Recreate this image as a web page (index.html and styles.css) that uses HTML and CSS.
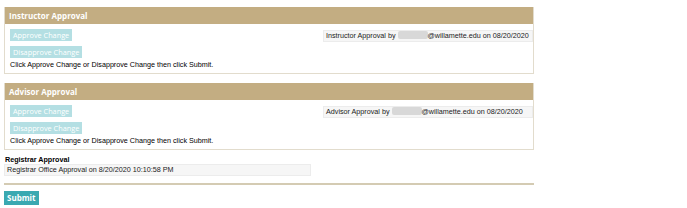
FILE: index.html
```html
<!DOCTYPE html>
<html lang="en">
<head>
  <meta charset="UTF-8">
  <title>Change Approval</title>
  <link rel="stylesheet" href="styles.css">
</head>
<body>
  <div class="approval-form">
    <!-- Instructor -->
    <div class="panel">
      <div class="panel-title">Instructor Approval</div>
      <div class="panel-body">
        <div class="actions">
          <button class="btn-light">Approve Change</button>
          <button class="btn-light">Disapprove Change</button>
          <div class="note">Click Approve Change or Disapprove Change then click Submit.</div>
        </div>
        <div class="field field-status">Instructor Approval by <span class="blur"></span>@willamette.edu on 08/20/2020</div>
      </div>
    </div>

    <!-- Advisor -->
    <div class="panel">
      <div class="panel-title">Advisor Approval</div>
      <div class="panel-body">
        <div class="actions">
          <button class="btn-light">Approve Change</button>
          <button class="btn-light">Disapprove Change</button>
          <div class="note">Click Approve Change or Disapprove Change then click Submit.</div>
        </div>
        <div class="field field-status">Advisor Approval by <span class="blur"></span>@willamette.edu on 08/20/2020</div>
      </div>
    </div>

    <!-- Registrar -->
    <div class="registrar">
      <div class="registrar-title">Registrar Approval</div>
      <div class="field field-registrar">Registrar Office Approval on 8/20/2020 10:10:58 PM</div>
    </div>

    <div class="footer">
      <button class="btn-submit">Submit</button>
    </div>
  </div>
</body>
</html>
```

FILE: styles.css
```css
body {
  margin: 0;
  font-family: "Liberation Sans", Arial, sans-serif;
  font-size: 7.2px;
  color: #111;
  background: #fff;
}

.approval-form {
  width: 530px;
  margin-left: 4px;
  padding-top: 7px;
}

/* Panels */
.panel {
  border: 1px solid #e2dccd;
  border-top: none;
  margin-bottom: 9px;
}

.panel + .panel {
  margin-bottom: 5px;
}

.panel-title {
  background: #c3ad82;
  color: #fff;
  font-family: "Open Sans", sans-serif;
  font-weight: bold;
  font-size: 8px;
  height: 17px;
  line-height: 17px;
  padding-left: 4px;
}

.panel-body {
  display: flex;
  justify-content: space-between;
  align-items: flex-start;
  padding: 5px 0 3px 5px;
}

.actions {
  display: flex;
  flex-direction: column;
  align-items: flex-start;
  gap: 5px;
}

.btn-light {
  background: #b4dfe3;
  color: #fff;
  border: none;
  font-family: "Open Sans", sans-serif;
  font-size: 7.3px;
  height: 12px;
  line-height: 12px;
  padding: 0 3px;
}

.note {
  margin-top: -3px;
  line-height: 10px;
  color: #000;
}

/* Read-only fields */
.field {
  background: #f6f6f6;
  border: 1px solid #ececec;
  height: 10px;
  line-height: 10px;
  padding-left: 2px;
  color: #222;
  white-space: nowrap;
}

.field-status {
  width: 206px;
  margin-top: 1px;
  font-size: 7.2px;
}

.blur {
  display: inline-block;
  width: 30px;
  height: 8px;
  vertical-align: -1px;
  background: #d8d8d8;
  border-radius: 2px;
}

/* Registrar */
.registrar {
  padding-left: 1px;
}

.registrar-title {
  font-weight: bold;
  line-height: 9px;
  color: #000;
}

.field-registrar {
  width: 303px;
  margin-left: -1px;
}

.footer {
  border-top: 2px solid #d4cbb3;
  margin-top: 7px;
  padding-top: 6px;
}

.btn-submit {
  background: #3aa9b1;
  color: #fff;
  border: none;
  font-family: "Open Sans", sans-serif;
  font-weight: bold;
  font-size: 8px;
  height: 14px;
  line-height: 14px;
  padding: 0 3px;
}
```
